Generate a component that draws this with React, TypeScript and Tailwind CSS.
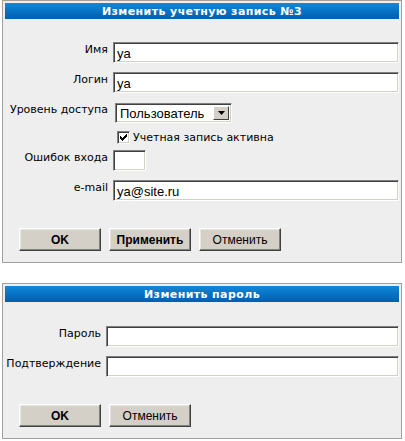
import React from "react";

const labelCls =
  "text-right text-[11px] leading-[13px] text-black [font-family:'DejaVu_Sans',Verdana,sans-serif] pt-[1px]";

const inputCls =
  "h-[21px] bg-white border border-t-[#808080] border-l-[#808080] border-r-[#ffffff] border-b-[#ffffff] shadow-[inset_1px_1px_0_#404040,inset_-1px_-1px_0_#d4d0c8] px-[3px] pt-[3px] text-[13px] leading-[15px] text-black [font-family:'Liberation_Sans',Arial,sans-serif] outline-none";

function Btn({ children, bold }: { children: React.ReactNode; bold?: boolean }) {
  return (
    <button
      className={
        "w-[82px] h-[23px] bg-[#d4d0c8] border border-t-[#ffffff] border-l-[#ffffff] border-r-[#404040] border-b-[#404040] shadow-[inset_-1px_-1px_0_#808080,inset_1px_1px_0_#e8e6e1] text-[12px] leading-[14px] text-black [font-family:'Liberation_Sans',Arial,sans-serif] flex items-center justify-center " +
        (bold ? "font-bold" : "font-normal")
      }
    >
      {children}
    </button>
  );
}

function Header({ title }: { title: string }) {
  return (
    <div className="h-[16px] bg-gradient-to-b from-[#1288da] to-[#005eb0] flex items-center justify-center text-white font-bold text-[11px] leading-[13px] [font-family:'DejaVu_Sans',Verdana,sans-serif] tracking-[0.4px]">
      {title}
    </div>
  );
}

export default function App() {
  return (
    <div className="w-[405px] h-[441px] bg-white overflow-hidden">
      {/* Panel 1 */}
      <div className="ml-[2px] w-[400px] border border-[#a0a0a0] bg-[#eeeeee] p-[2px]">
        <Header title="Изменить учетную запись №3" />
        <div className="pt-[23px] flex flex-col">
          <div className="grid grid-cols-[103px_286px] gap-x-[5px] items-start">
            <div className={labelCls}>Имя</div>
            <div className={inputCls}>ya</div>
          </div>
          <div className="mt-[9px] grid grid-cols-[103px_286px] gap-x-[5px] items-start">
            <div className={labelCls}>Логин</div>
            <div className={inputCls}>ya</div>
          </div>
          <div className="mt-[9px] grid grid-cols-[103px_286px] gap-x-[5px] items-start">
            <div className={labelCls}>Уровень доступа</div>
            <div className="mt-[1px] ml-[2px] w-[117px] h-[20px] bg-white border border-t-[#808080] border-l-[#808080] border-r-[#ffffff] border-b-[#ffffff] shadow-[inset_1px_1px_0_#404040,inset_-1px_-1px_0_#d4d0c8] flex p-[2px]">
              <div className="flex-1 pl-[2px] text-[13px] leading-[15px] text-black [font-family:'Liberation_Sans',Arial,sans-serif]">
                Пользователь
              </div>
              <div className="w-[16px] h-full bg-[#d4d0c8] border border-t-[#ffffff] border-l-[#ffffff] border-r-[#404040] border-b-[#404040] flex items-center justify-center">
                <svg width="7" height="4" viewBox="0 0 7 4">
                  <path d="M0 0H7L3.5 4Z" fill="#000" />
                </svg>
              </div>
            </div>
          </div>
          <div className="mt-[6px] grid grid-cols-[103px_286px] gap-x-[5px] items-center">
            <div />
            <div className="flex items-center h-[16px]">
              <div className="ml-[4px] w-[13px] h-[13px] bg-white border border-t-[#808080] border-l-[#808080] border-r-[#ffffff] border-b-[#ffffff] shadow-[inset_1px_1px_0_#404040,inset_-1px_-1px_0_#d4d0c8] flex items-center justify-center">
                <svg width="7" height="7" viewBox="0 0 7 7" shapeRendering="crispEdges">
                  <path d="M0 2h1v1h1v1h1v-1h1v-1h1v-1h1v-1h1v3h-1v1h-1v1h-1v1h-1v1h-1v-1h-1v-1h-1v-1h-1z" fill="#000" />
                </svg>
              </div>
              <span className="ml-[3px] text-[11px] leading-[13px] text-black [font-family:'DejaVu_Sans',Verdana,sans-serif]">
                Учетная запись активна
              </span>
            </div>
          </div>
          <div className="mt-[5px] grid grid-cols-[103px_286px] gap-x-[5px] items-start">
            <div className={labelCls}>Ошибок входа</div>
            <div className={inputCls + " w-[33px]"}></div>
          </div>
          <div className="mt-[9px] grid grid-cols-[103px_286px] gap-x-[5px] items-start">
            <div className={labelCls}>e-mail</div>
            <div className={inputCls}>ya@site.ru</div>
          </div>
          <div className="mt-[27px] mb-[9px] ml-[14px] flex gap-[8px]">
            <Btn bold>OK</Btn>
            <Btn bold>Применить</Btn>
            <Btn>Отменить</Btn>
          </div>
        </div>
      </div>

      {/* Panel 2 */}
      <div className="mt-[20px] ml-[2px] w-[400px] border border-[#a0a0a0] bg-[#eeeeee] p-[2px]">
        <Header title="Изменить пароль" />
        <div className="pt-[24px] flex flex-col">
          <div className="grid grid-cols-[96px_293px] gap-x-[5px] items-start">
            <div className={labelCls}>Пароль</div>
            <div className={inputCls}></div>
          </div>
          <div className="mt-[9px] grid grid-cols-[96px_293px] gap-x-[5px] items-start">
            <div className={labelCls}>Подтверждение</div>
            <div className={inputCls}></div>
          </div>
          <div className="mt-[27px] mb-[9px] ml-[14px] flex gap-[8px]">
            <Btn bold>OK</Btn>
            <Btn>Отменить</Btn>
          </div>
        </div>
      </div>
    </div>
  );
}
